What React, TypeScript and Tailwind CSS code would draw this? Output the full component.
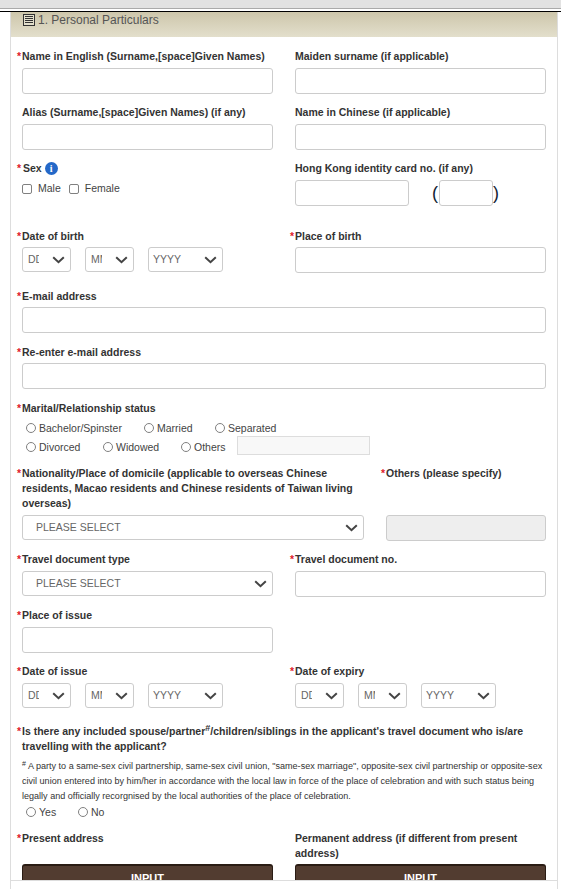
import type { ReactNode } from "react";

function Req() {
  return <span className="absolute -left-[5px] top-0 text-[10.5px] font-bold text-[#e0202a]">*</span>;
}

function Label({ req, children, className = "" }: { req?: boolean; children: ReactNode; className?: string }) {
  return (
    <div className={`relative text-[10.5px] font-bold leading-[15px] text-[#333] ${className}`}>
      {req && <Req />}
      {children}
    </div>
  );
}

function TextBox({ className = "w-[251px]", disabled = false }: { className?: string; disabled?: boolean }) {
  return (
    <div
      className={`h-[26px] shrink-0 rounded-[3px] border border-[#ccc] ${disabled ? "bg-[#eee]" : "bg-white"} ${className}`}
    />
  );
}

function Chevron() {
  return (
    <svg width="13" height="8" viewBox="0 0 13 8" className="shrink-0">
      <path d="M1.2 1.2 6.5 6.2 11.8 1.2" fill="none" stroke="#444" strokeWidth="2" />
    </svg>
  );
}

function Select({ text, w, pad, clip }: { text: string; w: string; pad: string; clip?: boolean }) {
  return (
    <div
      className={`flex h-[25px] shrink-0 items-center justify-between rounded-[3px] border border-[#ccc] bg-white pr-[5px] text-[10.5px] text-[#666] ${w} ${pad}`}
    >
      <span className={clip ? "w-[11px] overflow-hidden whitespace-nowrap" : ""}>{text}</span>
      <Chevron />
    </div>
  );
}

function DateRow() {
  return (
    <div className="flex gap-[14px]">
      <Select text="DD" w="w-[49px]" pad="pl-[5px]" clip />
      <Select text="MM" w="w-[49px]" pad="pl-[5px]" clip />
      <Select text="YYYY" w="w-[75px]" pad="pl-[4px]" />
    </div>
  );
}

function Check({ label }: { label: string }) {
  return (
    <span className="flex items-center gap-[6px]">
      <span className="size-[10px] rounded-[2px] border border-[#808080] bg-white" />
      {label}
    </span>
  );
}

function Radio({ label, className = "" }: { label: string; className?: string }) {
  return (
    <span className={`flex items-center gap-[3px] ${className}`}>
      <span className="relative -top-[1px] size-[10px] rounded-full border border-[#808080] bg-white" />
      {label}
    </span>
  );
}

function InputButton() {
  return (
    <div className="mt-[3px] flex h-[26px] w-[251px] justify-center rounded-t-[3px] border-x border-t-2 border-[#2a1c14] bg-[#523c30] pt-[5px] text-[11px] font-bold leading-[15px] text-white">
      INPUT
    </div>
  );
}

export default function App() {
  return (
    <div className="h-[889px] w-[561px] overflow-hidden bg-white font-['Liberation_Sans',Arial,sans-serif]">
      <div className="h-[9px] border-b border-[#aaa] bg-[#e2e2e2]" />
      <div className="h-[2px] bg-white" />
      <div className="h-[1px] bg-black" />

      <div className="ml-[10px] h-[877px] w-[548px] border-x border-[#ddd]">
        <div className="h-[869px] overflow-hidden border-b border-[#ddd]">
          <div className="flex h-[25px] items-start gap-[3px] bg-gradient-to-b from-[#cdc6ab] to-[#e3dfcc] pl-[12px] pt-[1px] text-[12px] leading-[14px] text-[#555]">
            <svg width="12" height="12" viewBox="0 0 12 12" shapeRendering="crispEdges" className="mt-[1px] shrink-0">
              <rect x="0.5" y="0.5" width="11" height="11" fill="#e3dfcc" stroke="#333" />
              <path d="M2 2.5h8M2 4.5h8M2 6.5h8M2 8.5h8" stroke="#333" strokeWidth="1" />
            </svg>
            1. Personal Particulars
          </div>

          <div className="pl-[11px] pt-[12px]">
            <div className="grid grid-cols-[273px_251px]">
              <Label req>Name in English (Surname,[space]Given Names)</Label>
              <Label>Maiden surname (if applicable)</Label>
              <div className="mt-[4px]"><TextBox /></div>
              <div className="mt-[4px]"><TextBox /></div>

              <Label className="mt-[11px]">Alias (Surname,[space]Given Names) (if any)</Label>
              <Label className="mt-[11px]">Name in Chinese (if applicable)</Label>
              <div className="mt-[4px]"><TextBox /></div>
              <div className="mt-[4px]"><TextBox /></div>

              <Label req className="mt-[11px] flex items-center gap-[3px]">
                <span className="pl-[1px]">Sex</span>
                <span className="flex size-[13px] items-center justify-center rounded-full bg-[#2468c8] font-['Liberation_Serif',serif] text-[10px] font-bold text-white">
                  i
                </span>
              </Label>
              <Label className="mt-[11px]">Hong Kong identity card no. (if any)</Label>
              <div className="mt-[5px] flex items-start gap-[8px] text-[10.5px] leading-[15px] text-[#444]">
                <Check label="Male" />
                <Check label="Female" />
              </div>
              <div className="mt-[4px] flex items-center">
                <TextBox className="w-[114px]" />
                <span className="ml-[23px] w-[7px] text-[18px] leading-none text-[#123]">(</span>
                <TextBox className="w-[54px]" />
                <span className="text-[18px] leading-none text-[#123]">)</span>
              </div>

              <Label req className="mt-[23px]">Date of birth</Label>
              <Label req className="mt-[23px]">Place of birth</Label>
              <div className="mt-[3px]"><DateRow /></div>
              <div className="mt-[3px]"><TextBox /></div>
            </div>

            <Label req className="mt-[16px]">E-mail address</Label>
            <TextBox className="mt-[3px] w-[524px]" />
            <Label req className="mt-[12px]">Re-enter e-mail address</Label>
            <TextBox className="mt-[3px] w-[524px]" />

            <Label req className="mt-[12px]">Marital/Relationship status</Label>
            <div className="mt-[5px] pl-[4px] text-[10.5px] leading-[15px] text-[#444]">
              <div className="flex">
                <Radio label="Bachelor/Spinster" className="w-[118px]" />
                <Radio label="Married" className="w-[71px]" />
                <Radio label="Separated" />
              </div>
              <div className="flex items-start">
                <Radio label="Divorced" className="w-[77px] pt-[4px]" />
                <Radio label="Widowed" className="w-[78px] pt-[4px]" />
                <Radio label="Others" className="w-[56px] pt-[4px]" />
                <div className="h-[19px] w-[133px] border border-[#ddd] bg-[#f8f8f8]" />
              </div>
            </div>

            <div className="mt-[11px] grid grid-cols-[364px_160px]">
              <Label req className="w-[342px]">
                Nationality/Place of domicile (applicable to overseas Chinese residents, Macao residents and Chinese residents of Taiwan living overseas)
              </Label>
              <Label req>Others (please specify)</Label>
              <div className="mt-[4px]">
                <Select text="PLEASE SELECT" w="w-[342px]" pad="pl-[13px]" />
              </div>
              <div className="mt-[4px]">
                <TextBox className="w-[160px]" disabled />
              </div>
            </div>

            <div className="mt-[11px] grid grid-cols-[273px_251px]">
              <Label req>Travel document type</Label>
              <Label req>Travel document no.</Label>
              <div className="mt-[4px]">
                <Select text="PLEASE SELECT" w="w-[251px]" pad="pl-[13px]" />
              </div>
              <div className="mt-[4px]"><TextBox /></div>
            </div>

            <Label req className="mt-[11px]">Place of issue</Label>
            <TextBox className="mt-[4px] w-[251px]" />

            <div className="mt-[11px] grid grid-cols-[273px_251px]">
              <Label req>Date of issue</Label>
              <Label req>Date of expiry</Label>
              <div className="mt-[4px]"><DateRow /></div>
              <div className="mt-[4px]"><DateRow /></div>
            </div>

            <Label req className="mt-[16px] w-[524px]">
              Is there any included spouse/partner<sup className="text-[9px] leading-none">#</sup>/children/siblings in the applicant's travel document who is/are travelling with the applicant?
            </Label>
            <p className="mt-[5px] w-[526px] text-[9.05px] leading-[15px] text-[#333]">
              <sup className="text-[7px] leading-none">#</sup> A party to a same-sex civil partnership, same-sex civil union, "same-sex marriage", opposite-sex civil partnership or opposite-sex civil union entered into by him/her in accordance with the local law in force of the place of celebration and with such status being legally and officially recorgnised by the local authorities of the place of celebration.
            </p>
            <div className="mt-[1px] flex pl-[4px] text-[10.5px] leading-[15px] text-[#444]">
              <Radio label="Yes" className="w-[52px]" />
              <Radio label="No" />
            </div>

            <div className="mt-[11px] grid grid-cols-[273px_251px]">
              <Label req>Present address</Label>
              <Label>Permanent address (if different from present address)</Label>
              <InputButton />
              <InputButton />
            </div>
          </div>
        </div>
      </div>
    </div>
  );
}
